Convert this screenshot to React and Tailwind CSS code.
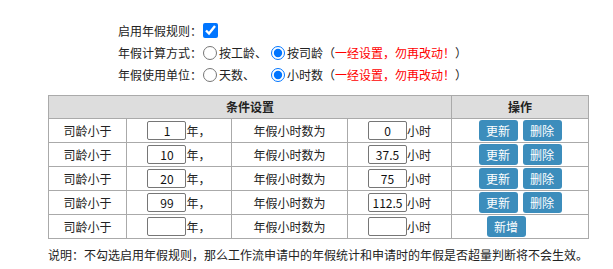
import React from "react";

const rows = [
  { y: "1", h: "0", add: false },
  { y: "10", h: "37.5", add: false },
  { y: "20", h: "75", add: false },
  { y: "99", h: "112.5", add: false },
  { y: "", h: "", add: true },
];

function Btn({ children, className = "" }) {
  return (
    <button className={"w-[39px] h-[21px] rounded-[3px] bg-[#3c8dbc] text-white text-[12px] leading-[21px] " + className}>
      {children}
    </button>
  );
}

function Inp({ value }) {
  return (
    <input
      readOnly
      value={value}
      className="w-[39px] h-[19px] border border-[#767676] rounded-[2px] text-center text-[12px] leading-[17px] text-[#111] bg-white outline-none"
    />
  );
}

export default function App() {
  return (
    <div
      className="w-[613px] h-[269px] bg-white text-[#222] text-[12px]"
      style={{ fontFamily: '"Noto Sans CJK SC", "Noto Sans", sans-serif' }}
    >
      <div className="pl-[118px] pt-[19px]">
        <div className="flex items-center h-[23px] leading-[16px]">
          <span className="w-[85px]">启用年假规则：</span>
          <input type="checkbox" readOnly checked className="w-[15px] h-[15px] m-0 accent-[#0075ff]" />
        </div>
        <div className="flex items-center h-[22px] leading-[16px]">
          <span className="w-[85px]">年假计算方式：</span>
          <input type="radio" readOnly name="a" className="w-[14px] h-[14px] m-0" />
          <span className="ml-[2px]">按工龄、</span>
          <input type="radio" readOnly name="a" checked className="w-[14px] h-[14px] ml-[4px] accent-[#0075ff]" />
          <span className="ml-[2px]">按司龄</span>
          <span>（</span>
          <span className="text-[#ff0000]">一经设置，勿再改动！</span>
          <span>）</span>
        </div>
        <div className="flex items-center h-[22px] leading-[16px]">
          <span className="w-[85px]">年假使用单位：</span>
          <input type="radio" readOnly name="b" className="w-[14px] h-[14px] m-0" />
          <span className="ml-[2px] w-[52px]">天数、</span>
          <input type="radio" readOnly name="b" checked className="w-[14px] h-[14px] ml-[0px] accent-[#0075ff]" />
          <span className="ml-[2px]">小时数</span>
          <span>（</span>
          <span className="text-[#ff0000]">一经设置，勿再改动！</span>
          <span>）</span>
        </div>
      </div>

      <table className="ml-[48px] mt-[9px] w-[540px] table-fixed border-collapse border border-[#aaaaaa]">
        <colgroup>
          <col className="w-[78px]" />
          <col className="w-[105px]" />
          <col className="w-[116px]" />
          <col className="w-[104px]" />
          <col className="w-[137px]" />
        </colgroup>
        <thead>
          <tr className="h-[23px] bg-[#dddddd]">
            <th colSpan={4} className="border border-[#aaaaaa] font-bold text-[12px] leading-[16px] p-0">条件设置</th>
            <th className="border border-[#aaaaaa] font-bold text-[12px] leading-[16px] p-0">操作</th>
          </tr>
        </thead>
        <tbody>
          {rows.map((r, i) => (
            <tr key={i} className="h-[24px]">
              <td className="border border-[#aaaaaa] text-center p-0 leading-[16px]">司龄小于</td>
              <td className="border border-[#aaaaaa] p-0">
                <div className="flex items-center justify-center leading-[16px]">
                  <Inp value={r.y} />
                  <span>年，</span>
                </div>
              </td>
              <td className="border border-[#aaaaaa] text-center p-0 leading-[16px]">年假小时数为</td>
              <td className="border border-[#aaaaaa] p-0">
                <div className="flex items-center justify-center leading-[16px]">
                  <Inp value={r.h} />
                  <span>小时</span>
                </div>
              </td>
              <td className="border border-[#aaaaaa] p-0">
                {r.add ? (
                  <div className="flex items-center justify-center pr-[28px]">
                    <Btn>新增</Btn>
                  </div>
                ) : (
                  <div className="flex items-center justify-center gap-[5px]">
                    <Btn>更新</Btn>
                    <Btn>删除</Btn>
                  </div>
                )}
              </td>
            </tr>
          ))}
        </tbody>
      </table>

      <div className="ml-[48px] mt-[7px] leading-[17px] text-[#222]">
        说明：不勾选启用年假规则，那么工作流申请中的年假统计和申请时的年假是否超量判断将不会生效。
      </div>
    </div>
  );
}
